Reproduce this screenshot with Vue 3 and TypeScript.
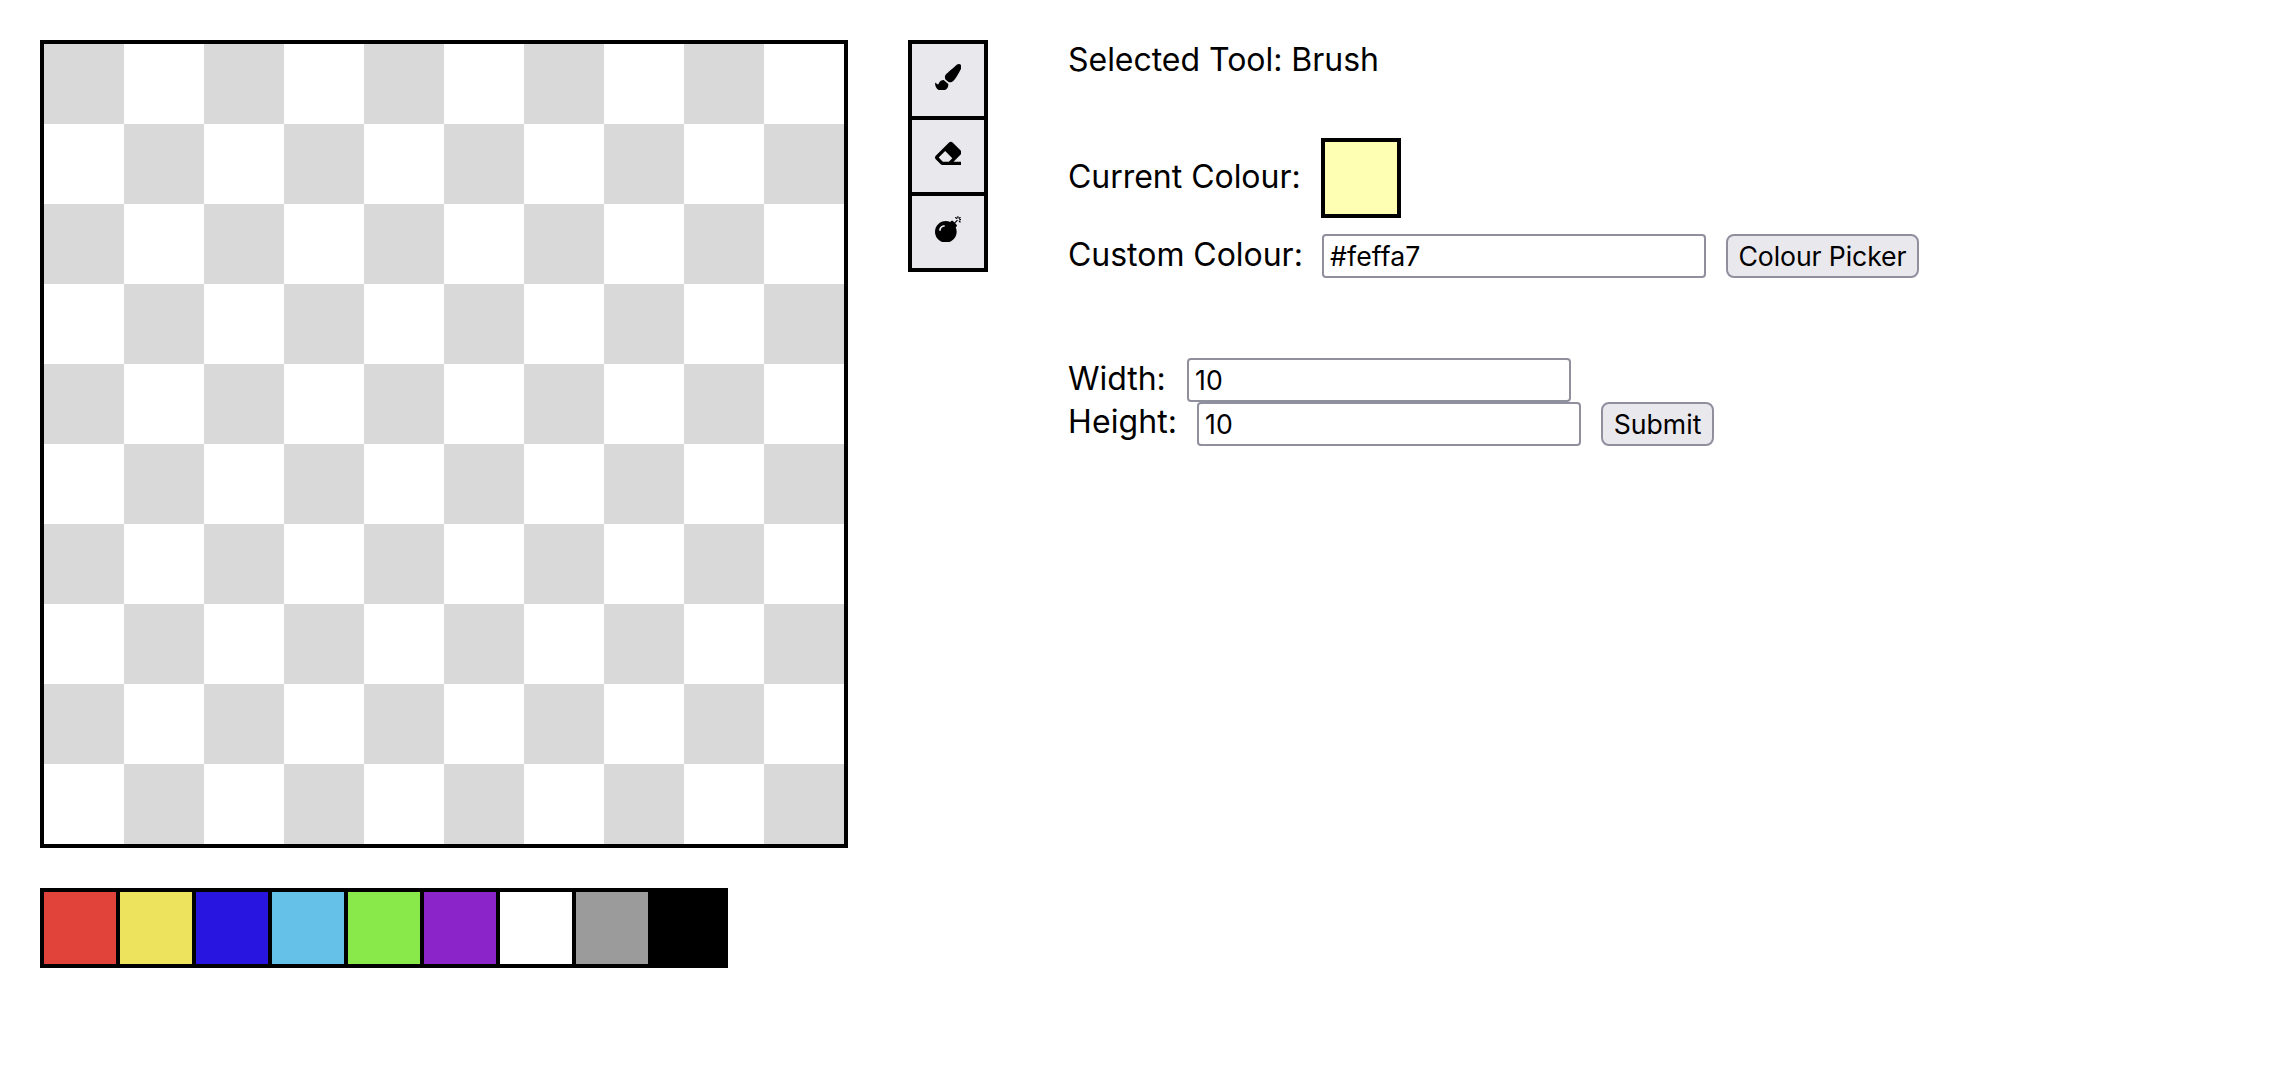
<script setup lang="ts">
import { ref } from 'vue'

interface Tool {
  name: string
  path: string
}

const tools: Tool[] = [
  {
    name: 'Brush',
    path: 'M167.02 309.34c-40.12 2.58-76.53 17.86-97.19 72.3-2.35 6.21-8 9.98-14.59 9.98-11.11 0-45.46-27.67-55.25-34.35C0 439.62 37.93 512 128 512c75.86 0 128-43.77 128-120.19 0-3.11-.65-6.08-.97-9.13l-88.01-73.34zM457.89 0c-15.16 0-29.37 6.71-40.21 16.45C213.27 199.05 192 203.34 192 257.09c0 13.7 3.25 26.76 8.73 38.7l63.82 53.18c7.21 1.8 14.64 3.03 22.39 3.03 62.11 0 98.11-45.47 211.16-256.46 7.38-14.35 13.9-29.85 13.9-45.99C512 20.64 486 0 457.89 0z',
  },
  {
    name: 'Eraser',
    path: 'M497.941 273.941c18.745-18.745 18.745-49.137 0-67.882l-160-160c-18.745-18.745-49.136-18.746-67.883 0l-256 256c-18.745 18.745-18.745 49.137 0 67.882l96 96A48.004 48.004 0 0 0 144 480h356c6.627 0 12-5.373 12-12v-40c0-6.627-5.373-12-12-12H355.883l142.058-142.059zm-302.627-62.627l137.373 137.373L265.373 416H150.628l-80-80 124.686-124.686z',
  },
  {
    name: 'Bomb',
    path: 'M440.5 88.5l-52 52L415 167c9.4 9.4 9.4 24.6 0 33.9l-17.4 17.4c11.8 26.1 18.4 55.1 18.4 85.6 0 114.9-93.1 208-208 208S0 418.9 0 304 93.1 96 208 96c30.5 0 59.5 6.6 85.6 18.4L311 97c9.4-9.4 24.6-9.4 33.9 0l26.5 26.5 52-52 17.1 17zM500 60h-24c-6.6 0-12 5.4-12 12s5.4 12 12 12h24c6.6 0 12-5.4 12-12s-5.4-12-12-12zM440 0c-6.6 0-12 5.4-12 12v24c0 6.6 5.4 12 12 12s12-5.4 12-12V12c0-6.6-5.4-12-12-12zm33.9 55l17-17c4.7-4.7 4.7-12.3 0-17-4.7-4.7-12.3-4.7-17 0l-17 17c-4.7 4.7-4.7 12.3 0 17 4.8 4.7 12.4 4.7 17 0zm-67.8 0c4.7 4.7 12.3 4.7 17 0 4.7-4.7 4.7-12.3 0-17l-17-17c-4.7-4.7-12.3-4.7-17 0-4.7 4.7-4.7 12.3 0 17l17 17zm67.8 34c-4.7-4.7-12.3-4.7-17 0-4.7 4.7-4.7 12.3 0 17l17 17c4.7 4.7 12.3 4.7 17 0 4.7-4.7 4.7-12.3 0-17l-17-17zM112 272c0-35.3 28.7-64 64-64 8.8 0 16-7.2 16-16s-7.2-16-16-16c-52.9 0-96 43.1-96 96 0 8.8 7.2 16 16 16s16-7.2 16-16z',
  },
]

const palette = ['#e1433b', '#eee35d', '#2816e0', '#66c1e9', '#8ae94a', '#8b25c9', '#ffffff', '#9b9b9b', '#000000']

const selectedTool = ref('Brush')
const colour = ref('#feffa7')
const swatch = ref('#feffb2')
const width = ref('10')
const height = ref('10')
const cells = ref<string[]>(Array(100).fill(''))

function pick(c: string) {
  colour.value = c
  swatch.value = c
}

function choose(name: string) {
  if (name === 'Bomb') cells.value = cells.value.map(() => '')
  else selectedTool.value = name
}

function paint(i: number) {
  cells.value[i] = selectedTool.value === 'Brush' ? swatch.value : ''
}

function isDark(i: number) {
  return (Math.floor(i / 10) + i) % 2 === 0
}
</script>

<template>
  <main class="app">
    <section class="left">
      <div class="board">
        <div
          v-for="(c, i) in cells"
          :key="i"
          class="cell"
          :class="{ dark: isDark(i) }"
          :style="c ? { backgroundColor: c } : undefined"
          @click="paint(i)"
        ></div>
      </div>
      <div class="palette">
        <button
          v-for="c in palette"
          :key="c"
          class="swatch"
          :style="{ backgroundColor: c }"
          :aria-label="c"
          @click="pick(c)"
        ></button>
      </div>
    </section>

    <nav class="tools">
      <button v-for="t in tools" :key="t.name" class="tool" :aria-label="t.name" @click="choose(t.name)">
        <svg viewBox="0 0 512 512" fill="currentColor"><path :d="t.path" /></svg>
      </button>
    </nav>

    <section class="panel">
      <p class="row selected"><span class="label l-selected">Selected Tool: {{ selectedTool }}</span></p>
      <div class="row current">
        <span class="label l-current">Current Colour:</span>
        <div class="preview" :style="{ backgroundColor: swatch }"></div>
      </div>
      <div class="row custom">
        <label class="label l-custom">Custom Colour:</label>
        <input v-model="colour" type="text" />
        <button class="btn picker">Colour Picker</button>
      </div>
      <div class="row width">
        <label class="label l-width">Width:</label>
        <input v-model="width" type="text" />
      </div>
      <div class="row height">
        <label class="label l-height">Height:</label>
        <input v-model="height" type="text" />
        <button class="btn submit">Submit</button>
      </div>
    </section>
  </main>
</template>

<style>
body {
  background: #fff;
}
</style>

<style scoped>
.app {
  display: flex;
  align-items: flex-start;
  padding: 40px;
  font-family: Inter, "Liberation Sans", sans-serif;
  font-size: 32px;
  color: #000;
}
.left {
  width: 808px;
}
.board {
  display: grid;
  grid-template-columns: repeat(10, 80px);
  grid-auto-rows: 80px;
  border: 4px solid #000;
}
.cell {
  background: #fff;
}
.dark {
  background: #d9d9d9;
}
.palette {
  display: flex;
  gap: 4px;
  width: 680px;
  margin-top: 40px;
  border: 4px solid #000;
  background: #000;
}
.swatch {
  width: 72px;
  height: 72px;
  padding: 0;
  border: 0;
}
.tools {
  display: flex;
  flex-direction: column;
  gap: 4px;
  margin-left: 60px;
  border: 4px solid #000;
  background: #000;
}
.tool {
  display: flex;
  justify-content: center;
  align-items: flex-start;
  width: 72px;
  height: 72px;
  padding: 19.67px 0 0;
  border: 0;
  color: #000;
  background: #e9e9ed;
}
.tool svg {
  width: 26.67px;
  height: 26.67px;
}
.panel {
  margin-left: 80px;
}
.row {
  display: flex;
  align-items: flex-start;
  margin: 0;
}
.label {
  line-height: 40px;
  letter-spacing: -0.03px;
  white-space: nowrap;
}
.selected {
  height: 98px;
}
.current {
  height: 96px;
}
.current .label {
  margin-top: 19px;
}
.l-current {
  width: 253px;
}
.custom {
  height: 124px;
}
.custom .label,
.width .label {
  margin-top: 1px;
}
.l-custom {
  width: 254px;
}
.width,
.height {
  height: 44px;
}
.l-width {
  width: 119px;
}
.l-height {
  width: 129px;
  letter-spacing: 0.1px;
}
.preview {
  box-sizing: border-box;
  width: 80px;
  height: 80px;
  border: 4px solid #000;
}
input {
  box-sizing: border-box;
  width: 384px;
  height: 44px;
  padding: 0 6px;
  border: 2px solid #8f8f9d;
  border-radius: 4px;
  font: 26.667px Inter, sans-serif;
  letter-spacing: 0.1px;
  color: #000;
  background: #fff;
}
.btn {
  box-sizing: border-box;
  height: 44px;
  margin-left: 20px;
  padding: 0;
  border: 2px solid #8f8f9d;
  border-radius: 8px;
  font: 26.667px Inter, sans-serif;
  white-space: nowrap;
  color: #000;
  background: #e9e9ed;
}
.picker {
  width: 193px;
  letter-spacing: -0.12px;
}
.submit {
  width: 113px;
}
</style>
